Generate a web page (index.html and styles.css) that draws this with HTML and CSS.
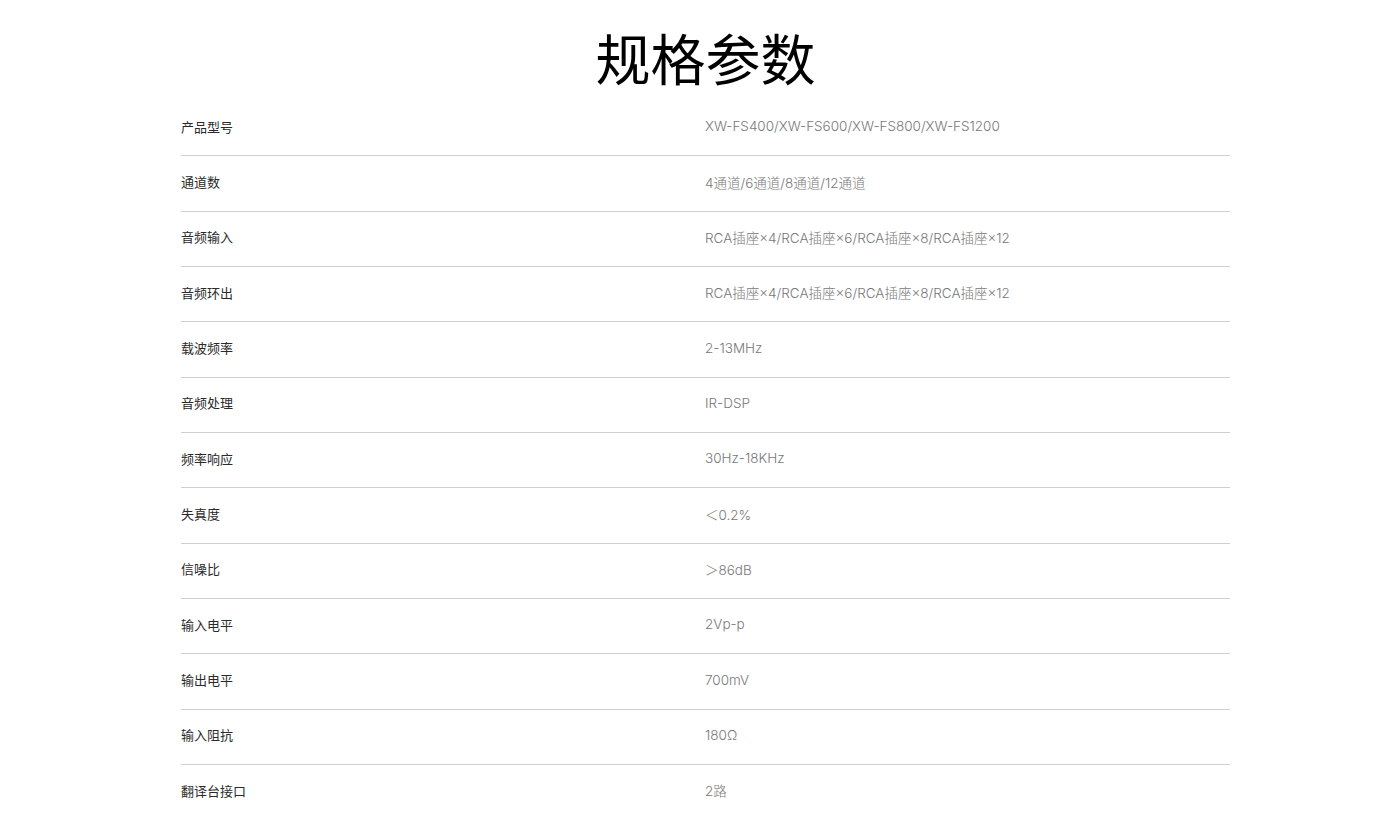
FILE: index.html
```html
<!DOCTYPE html>
<html lang="zh-CN">
<head>
<meta charset="utf-8">
<title>规格参数</title>
<link rel="stylesheet" href="styles.css">
</head>
<body>
<section class="specs">
  <h1 class="specs-title">规格参数</h1>
  <div class="specs-table">
    <div class="row"><div class="label">产品型号</div><div class="value">XW-FS400/XW-FS600/XW-FS800/XW-FS1200</div></div>
    <div class="row"><div class="label">通道数</div><div class="value">4通道/6通道/8通道/12通道</div></div>
    <div class="row"><div class="label">音频输入</div><div class="value">RCA插座×4/RCA插座×6/RCA插座×8/RCA插座×12</div></div>
    <div class="row"><div class="label">音频环出</div><div class="value">RCA插座×4/RCA插座×6/RCA插座×8/RCA插座×12</div></div>
    <div class="row"><div class="label">载波频率</div><div class="value">2-13MHz</div></div>
    <div class="row"><div class="label">音频处理</div><div class="value">IR-DSP</div></div>
    <div class="row"><div class="label">频率响应</div><div class="value">30Hz-18KHz</div></div>
    <div class="row"><div class="label">失真度</div><div class="value">＜0.2%</div></div>
    <div class="row"><div class="label">信噪比</div><div class="value">＞86dB</div></div>
    <div class="row"><div class="label">输入电平</div><div class="value">2Vp-p</div></div>
    <div class="row"><div class="label">输出电平</div><div class="value">700mV</div></div>
    <div class="row"><div class="label">输入阻抗</div><div class="value">180Ω</div></div>
    <div class="row"><div class="label">翻译台接口</div><div class="value">2路</div></div>
  </div>
</section>
</body>
</html>
```

FILE: styles.css
```css
html, body {
  margin: 0;
  padding: 0;
  background: #fff;
}
body {
  font-family: "Noto Sans CJK SC", "Noto Sans", sans-serif;
  overflow: hidden;
}
.specs {
  width: 1049px;
  margin-left: 181px;
}
.specs-title {
  margin: 0;
  padding-top: 21px;
  height: 101px;
  box-sizing: border-box;
  text-align: center;
  font-size: 55px;
  line-height: 70px;
  font-weight: 400;
  color: #000;
  font-family: "Noto Sans CJK SC", sans-serif;
}
.specs-table {
  display: flex;
  flex-direction: column;
}
.row {
  display: grid;
  grid-template-columns: 524px 1fr;
  height: 55.35px;
  padding-bottom: 4px;
  align-items: center;
  border-bottom: 1px solid #cfcfcf;
  box-sizing: border-box;
}
.label {
  font-size: 13px;
  color: #2a2a2a;
}
.value {
  font-size: 13.5px;
  font-weight: 300;
  color: #777;
  font-family: "Inter", "Noto Sans CJK SC", sans-serif;
}
```
